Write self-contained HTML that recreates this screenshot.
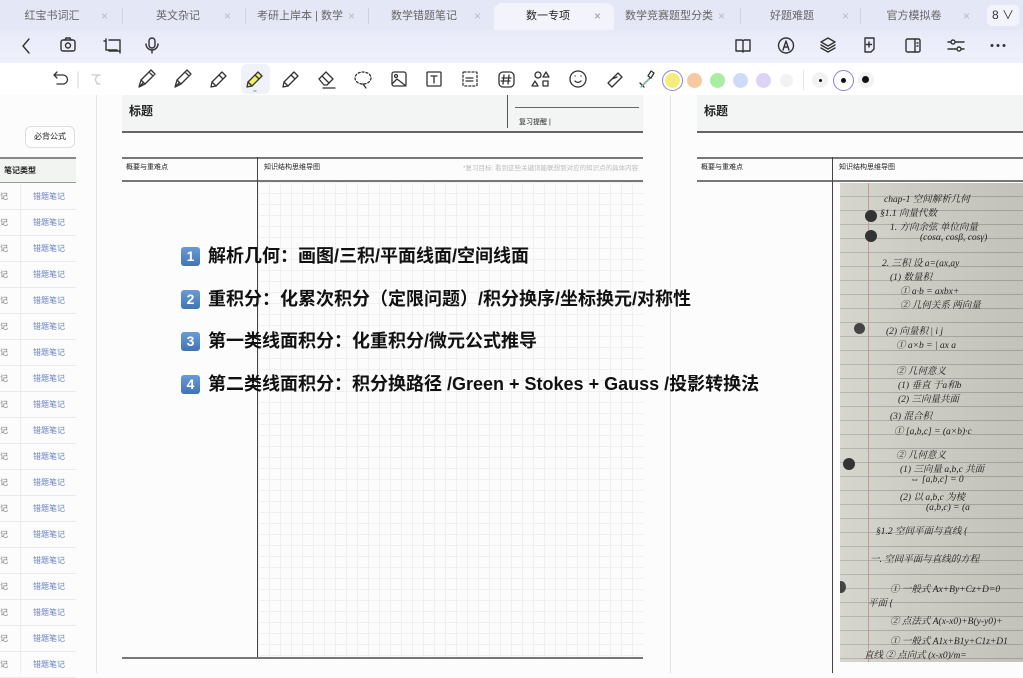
<!DOCTYPE html>
<html><head><meta charset="utf-8"><style>
*{margin:0;padding:0;box-sizing:border-box}
body{width:1023px;height:673px;overflow:hidden;position:relative;background:#fbfcfb;font-family:"Liberation Sans","Noto Sans CJK SC",sans-serif;color:#222}
.abs{position:absolute}
#tabs{left:0;top:0;width:1023px;height:30px;background:#e4e7f6}
.tab{position:absolute;top:0;height:30px;line-height:32px;font-size:11px;color:#666;text-align:center}
.x{position:absolute;top:0;line-height:32px;font-size:12px;color:#bbb}
.sep{position:absolute;top:8px;width:1px;height:16px;background:#cfd2e2}
#tb2{left:0;top:30px;width:1023px;height:33px;background:linear-gradient(#e8eaf8,#eff1fb)}
#tb3{left:0;top:63px;width:1023px;height:32px;background:#fff}
svg.i{position:absolute;overflow:visible}
.dot{position:absolute;border-radius:50%}
.gl{position:absolute;background:#666}
.grid{position:absolute;background-image:linear-gradient(#eef2ee 1px,transparent 1px),linear-gradient(90deg,#eef2ee 1px,transparent 1px);background-size:11px 11px}
.big{position:absolute;left:181px;font-size:18px;font-weight:bold;color:#111;white-space:nowrap;line-height:24px}
.bd{display:inline-block;width:19px;height:19px;border-radius:3px;background:linear-gradient(#6b9bd6,#3f74b5);color:#fff;font-size:14px;text-align:center;line-height:19px;vertical-align:1px;margin-right:8px}
.row{position:absolute;left:0;width:76px;height:26px;border-bottom:1px solid #e8ebe8;font-size:8px;line-height:26px}
.hw{position:absolute;font-family:"Liberation Serif","Noto Serif CJK SC",serif;font-style:italic;font-size:9.5px;color:#222;white-space:nowrap}
</style></head><body>
<div id="tabs" class="abs">
<div class="tab" style="left:0;width:104px">红宝书词汇</div><div class="x" style="left:101px">×</div>
<div class="sep" style="left:122px"></div>
<div class="tab" style="left:125px;width:106px">英文杂记</div><div class="x" style="left:224px">×</div>
<div class="sep" style="left:245px"></div>
<div class="tab" style="left:250px;width:100px">考研上岸本 | 数学</div><div class="x" style="left:348px">×</div>
<div class="sep" style="left:368px"></div>
<div class="tab" style="left:372px;width:104px">数学错题笔记</div><div class="x" style="left:474px">×</div>
<div class="abs" style="left:494px;top:3px;width:120px;height:27px;background:#f3f4fb;border-radius:8px 8px 0 0"></div>
<div class="tab" style="left:500px;width:96px;color:#222">数一专项</div><div class="x" style="left:594px;color:#999">×</div>
<div class="tab" style="left:617px;width:104px">数学竞赛题型分类</div><div class="x" style="left:718px">×</div>
<div class="sep" style="left:740px"></div>
<div class="tab" style="left:742px;width:100px">好题难题</div><div class="x" style="left:842px">×</div>
<div class="sep" style="left:860px"></div>
<div class="tab" style="left:864px;width:100px">官方模拟卷</div><div class="x" style="left:963px">×</div>
<div class="abs" style="left:987px;top:5px;width:32px;height:21px;background:#f3f4fb;border-radius:5px;font-size:12px;line-height:21px;text-align:center;color:#333">8 ∨</div>
</div>
<div id="tb2" class="abs"></div>
<svg class="i" style="left:0;top:30px" width="1023" height="33" fill="none" stroke="#333" stroke-width="1.4" stroke-linecap="round" stroke-linejoin="round">
<path d="M29 9l-6 7 6 7"/>
<rect x="61" y="10" width="14" height="11" rx="2"/><circle cx="68" cy="15.5" r="2.5"/><path d="M65 10l1-2h4l1 2"/>
<path d="M106 9v11h11M109 21h11V10h-11"/><path d="M104 11h2M120 21v2"/>
<rect x="149" y="8" width="6" height="10" rx="3"/><path d="M146 14a6 6 0 0 0 12 0M152 20v3"/>
<path d="M736 10h6l1 1 1-1h6v11h-6l-1 1-1-1h-6z M743 11v10"/>
<circle cx="786" cy="15.5" r="7.5"/><path d="M783 20l3-9 3 9M784 17h4"/>
<path d="M828 8l7 4-7 4-7-4z M821 15l7 4 7-4 M821 18l7 4 7-4"/>
<path d="M865 8h9v11l-3 3h-6z M869 12v5M866.5 14.5h5"/>
<rect x="906" y="9" width="14" height="13" rx="1.5"/><path d="M915 9v13 M917 13h1M917 16h1"/>
<path d="M948 12h16M948 19h16"/><circle cx="953" cy="12" r="2" fill="#eef0fa"/><circle cx="959" cy="19" r="2" fill="#eef0fa"/>
<circle cx="992" cy="15.5" r="0.8" fill="#333"/><circle cx="998" cy="15.5" r="0.8" fill="#333"/><circle cx="1004" cy="15.5" r="0.8" fill="#333"/>
</svg>
<div id="tb3" class="abs"></div>
<div class="abs" style="left:241px;top:64px;width:29px;height:30px;background:#f0f1f9;border-radius:6px"></div>
<svg class="i" style="left:0;top:63px" width="1023" height="32" fill="none" stroke="#333" stroke-width="1.3" stroke-linecap="round" stroke-linejoin="round">
<path d="M54 12h9a4.5 4.5 0 0 1 0 9h-6M54 12l3-3M54 12l3 3" />
<path d="M78 9v16" stroke="#ddd"/>
<path d="M92 12h8a4.5 4.5 0 0 0 0 9h-3M101 12" stroke="#ccc"/>
<path d="M139 24l2-7 8-8 4 4-8 8z M149 9l2-2 4 4-2 2 M141 17l4 4 M139 24l4-4"/>
<path d="M175 24l2-7 8-8 4 4-8 8z M185 9l2-2 4 4-2 2 M177 17l4 4 M175 24l4-4"/>
<path d="M211 24l1-5 10-10 4 4-10 10z M219 12l4 4 M212 19l4 4"/>
<path d="M247 24l1-5 10-10 4 4-10 10z" fill="#f2ef6a"/><path d="M255 12l4 4 M248 19l4 4"/>
<path d="M254 28h2" stroke="#999"/>
<path d="M283 24l1-5 10-10 4 4-10 10z M291 12l4 4 M284 19l4 4"/>
<path d="M319 16l7-7 7 7-6 6h-3z M322 13l7 7 M323 25h12"/>
<ellipse cx="363" cy="15" rx="8" ry="6" stroke-dasharray="2 2"/><path d="M363 21l3 4"/>
<rect x="392" y="9" width="14" height="14" rx="2"/><circle cx="396" cy="13" r="1.5"/><path d="M392 21l5-5 9 7"/>
<rect x="427" y="9" width="14" height="14" rx="1"/><path d="M431 13h6M434 13v7"/>
<rect x="463" y="9" width="14" height="14" rx="1" stroke-dasharray="2 2"/><path d="M466 15h7M466 18h7"/>
<rect x="499" y="9" width="15" height="15" rx="4"/><path d="M504 12l-1 9M509 12l-1 9M502 15h9M501 18h9"/>
<circle cx="538" cy="12" r="3"/><path d="M546 9l3 5h-6z"/><path d="M535 18l3 5h-6z"/><rect x="543" y="18" width="5" height="5"/>
<circle cx="578" cy="16" r="8"/><path d="M575 18a4 4 0 0 0 6 0M575 13h.1M581 13h.1"/>
<path d="M608 20l10-10 4 4-10 10z M612 16l5-2"/>
<path d="M642 23l8-8 M648 13l3-5 3 2-3 5z M640 20l4 4" />
<path d="M649 16l-8 8" stroke="#7b9"/>
</svg>
<div class="dot" style="left:662px;top:70px;width:21px;height:21px;border:1.5px solid #8a86c8"></div>
<div class="dot" style="left:665px;top:73px;width:15px;height:15px;background:#f3ee7a"></div>
<div class="dot" style="left:687px;top:73px;width:15px;height:15px;background:#f6c9a0"></div>
<div class="dot" style="left:710px;top:73px;width:15px;height:15px;background:#a9eda2"></div>
<div class="dot" style="left:733px;top:73px;width:15px;height:15px;background:#cfdcf7"></div>
<div class="dot" style="left:756px;top:73px;width:15px;height:15px;background:#dcd4f7"></div>
<div class="dot" style="left:780px;top:74px;width:13px;height:13px;background:#f2f2f2"></div>
<div class="abs" style="left:803px;top:70px;width:1px;height:20px;background:#e6e6e6"></div>
<div class="dot" style="left:812px;top:72px;width:16px;height:16px;background:#f2f2f2"></div>
<div class="dot" style="left:819px;top:79px;width:3px;height:3px;background:#111"></div>
<div class="dot" style="left:833px;top:70px;width:21px;height:21px;border:1.5px solid #8a86c8"></div>
<div class="dot" style="left:841px;top:78px;width:5px;height:5px;background:#111"></div>
<div class="dot" style="left:858px;top:72px;width:16px;height:16px;background:#f2f2f2"></div>
<div class="dot" style="left:862px;top:76px;width:7px;height:7px;background:#111"></div>

<!-- sidebar -->
<div class="abs" style="left:96px;top:95px;width:1px;height:578px;background:#e4e6e4"></div>
<div class="abs" style="left:25px;top:126px;width:50px;height:22px;border:1px solid #ddd;border-radius:6px;background:#fff;font-size:8px;line-height:20px;text-align:center">必背公式</div>
<div class="abs" style="left:0;top:157px;width:76px;height:2px;background:#888"></div>
<div class="abs" style="left:0;top:159px;width:76px;height:24px;background:#f2f4f2;border-bottom:1px solid #999;font-size:8px;line-height:24px;font-weight:bold;padding-left:4px">笔记类型</div>
<div class="abs" style="left:20px;top:184px;width:1px;height:489px;background:#ececec"></div>
<div id="rows"></div>

<!-- page 1 -->
<div class="abs" style="left:122px;top:95px;width:521px;height:36px;background:#f3f5f5"></div>
<div class="abs" style="left:129px;top:102px;font-size:12px;font-weight:bold">标题</div>
<div class="abs" style="left:507px;top:95px;width:1px;height:33px;background:#555"></div>
<div class="abs" style="left:515px;top:107px;width:124px;height:1px;background:#666"></div>
<div class="abs" style="left:519px;top:117px;font-size:7px">复习提醒 |</div>
<div class="gl" style="left:122px;top:131px;width:521px;height:2px"></div>
<div class="gl" style="left:122px;top:157px;width:521px;height:1.5px;background:#777"></div>
<div class="abs" style="left:126px;top:162px;font-size:7px">概要与重难点</div>
<div class="abs" style="left:264px;top:162px;font-size:7px">知识结构思维导图</div>
<div class="abs" style="left:463px;top:162px;font-size:6.5px;color:#bbb">*复习目标: 看到这些关键词能联想到对应的知识点的具体内容</div>
<div class="gl" style="left:122px;top:180px;width:521px;height:1.5px;background:#777"></div>
<div class="grid" style="left:258px;top:182px;width:385px;height:476px"></div>
<div class="gl" style="left:257px;top:157px;width:1px;height:502px;background:#444"></div>
<div class="gl" style="left:122px;top:657px;width:521px;height:2px;background:#777"></div>
<div class="abs" style="left:670px;top:95px;width:1px;height:578px;background:#e2e4e2"></div>

<div class="big" style="top:244px"><span class="bd">1</span>解析几何：画图/三积/平面线面/空间线面</div>
<div class="big" style="top:287px"><span class="bd">2</span>重积分：化累次积分（定限问题）/积分换序/坐标换元/对称性</div>
<div class="big" style="top:329px"><span class="bd">3</span>第一类线面积分：化重积分/微元公式推导</div>
<div class="big" style="top:372px"><span class="bd">4</span>第二类线面积分：积分换路径 /Green + Stokes + Gauss /投影转换法</div>

<!-- page 2 -->
<div class="abs" style="left:697px;top:95px;width:326px;height:36px;background:#f3f5f5"></div>
<div class="abs" style="left:704px;top:102px;font-size:12px;font-weight:bold">标题</div>
<div class="gl" style="left:697px;top:131px;width:326px;height:2px"></div>
<div class="gl" style="left:697px;top:157px;width:326px;height:1.5px;background:#777"></div>
<div class="abs" style="left:701px;top:162px;font-size:7px">概要与重难点</div>
<div class="abs" style="left:839px;top:162px;font-size:7px">知识结构思维导图</div>
<div class="gl" style="left:697px;top:180px;width:326px;height:1.5px;background:#777"></div>
<div class="gl" style="left:832px;top:157px;width:1px;height:516px;background:#444"></div>
<div class="abs" style="left:840px;top:183px;width:183px;height:479px;overflow:hidden;background:repeating-linear-gradient(180deg,#cdccc4 0,#cdccc4 13px,#a8a7a1 13px,#a8a7a1 14px);">
<div class="abs" style="left:28px;top:0;width:1px;height:479px;background:#c09088"></div>
<div class="abs" style="left:0;top:0;width:183px;height:479px;background:linear-gradient(90deg,rgba(255,255,255,.18),rgba(0,0,0,0) 40%,rgba(0,0,0,.05))"></div>
<div class="dot" style="left:25px;top:27px;width:12px;height:12px;background:#333"></div>
<div class="dot" style="left:25px;top:47px;width:12px;height:12px;background:#333"></div>
<div class="dot" style="left:14px;top:140px;width:11px;height:11px;background:#444"></div>
<div class="dot" style="left:3px;top:275px;width:12px;height:12px;background:#333"></div>
<div class="dot" style="left:-4px;top:398px;width:10px;height:12px;background:#444"></div>
<div class="hw" style="left:44px;top:8px">chap-1 空间解析几何</div>
<div class="hw" style="left:40px;top:22px">§1.1 向量代数</div>
<div class="hw" style="left:50px;top:36px">1. 方向余弦 单位向量</div>
<div class="hw" style="left:80px;top:50px">(cosα, cosβ, cosγ)</div>
<div class="hw" style="left:42px;top:72px">2. 三积 设 a=(ax,ay</div>
<div class="hw" style="left:50px;top:86px">(1) 数量积</div>
<div class="hw" style="left:60px;top:100px">① a·b = axbx+</div>
<div class="hw" style="left:60px;top:114px">② 几何关系 两向量</div>
<div class="hw" style="left:46px;top:140px">(2) 向量积  | i  j</div>
<div class="hw" style="left:56px;top:154px">① a×b =   | ax a</div>
<div class="hw" style="left:56px;top:180px">② 几何意义</div>
<div class="hw" style="left:58px;top:194px">(1) 垂直 于a和b</div>
<div class="hw" style="left:58px;top:208px">(2) 三向量共面</div>
<div class="hw" style="left:50px;top:225px">(3) 混合积</div>
<div class="hw" style="left:54px;top:240px">① [a,b,c] = (a×b)·c</div>
<div class="hw" style="left:56px;top:264px">② 几何意义</div>
<div class="hw" style="left:60px;top:278px">(1) 三向量 a,b,c 共面</div>
<div class="hw" style="left:70px;top:292px">⇔ [a,b,c] = 0</div>
<div class="hw" style="left:60px;top:306px">(2) 以 a,b,c 为棱</div>
<div class="hw" style="left:86px;top:320px">(a,b,c) = (a</div>
<div class="hw" style="left:36px;top:340px">§1.2 空间平面与直线 {</div>
<div class="hw" style="left:30px;top:368px">一. 空间平面与直线的方程</div>
<div class="hw" style="left:50px;top:398px">① 一般式 Ax+By+Cz+D=0</div>
<div class="hw" style="left:28px;top:412px">平面 {</div>
<div class="hw" style="left:50px;top:430px">② 点法式 A(x-x0)+B(y-y0)+</div>
<div class="hw" style="left:50px;top:450px">① 一般式 A1x+B1y+C1z+D1</div>
<div class="hw" style="left:24px;top:464px">直线 ② 点向式 (x-x0)/m=</div>
</div>
<script>
var r=document.getElementById('rows'),h='';
for(var i=0;i<19;i++){h+='<div class="row" style="top:'+(184+i*26)+'px"><span style="position:absolute;left:0;color:#777">记</span><span style="position:absolute;left:33px;color:#6a80cc">错题笔记</span></div>';}
r.innerHTML=h;
</script>
</body></html>
